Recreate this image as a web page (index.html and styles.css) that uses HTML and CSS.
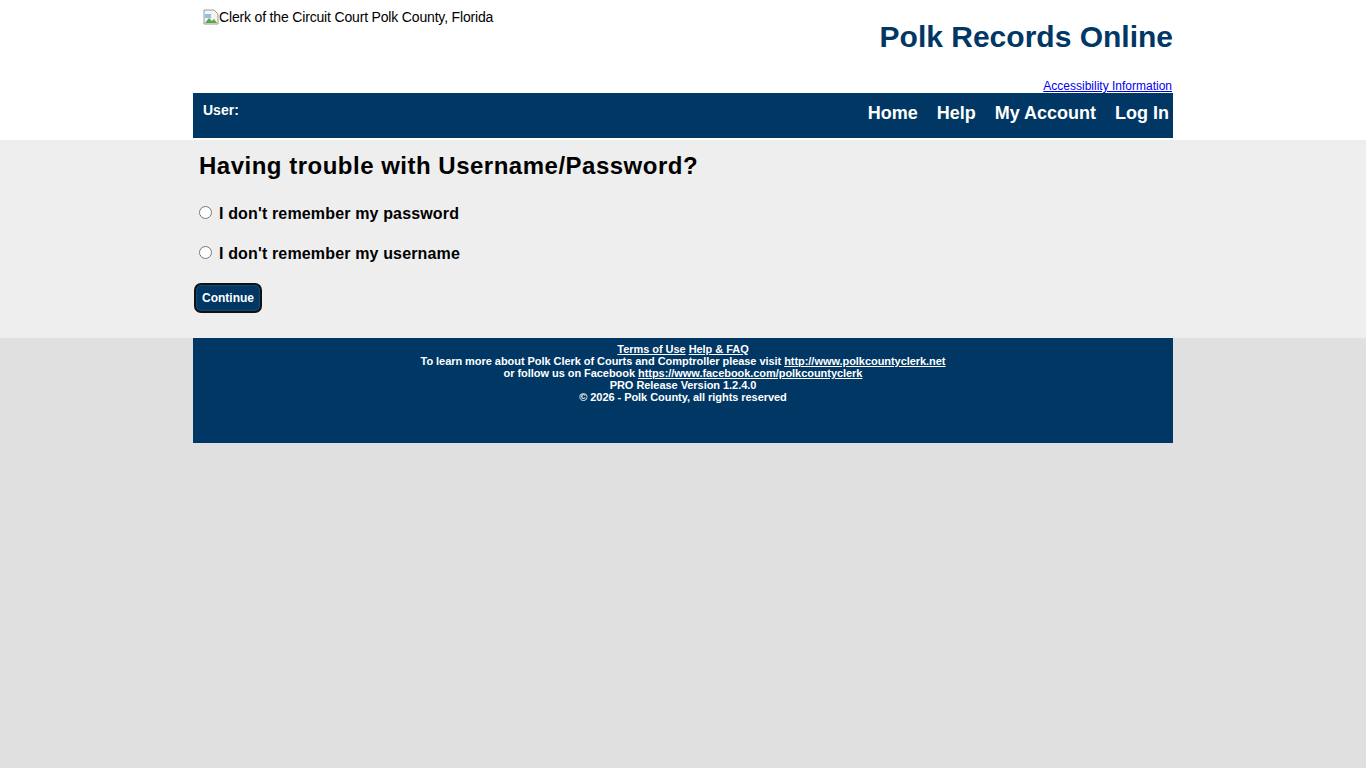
FILE: index.html
```html
<!DOCTYPE html>
<html>
<head>
<meta charset="utf-8">
<title>Polk Records Online</title>
<link rel="stylesheet" href="styles.css">
</head>
<body>
<div class="top">
  <div class="wrap">
    <div class="masthead">
      <div class="logo"><span class="broken"><svg width="16" height="16" viewBox="0 0 16 16"><path d="M1 1h10l4 4v10H1z" fill="#f4f4f4" stroke="#9a9a9a"/><path d="M2 14l4-5 3 3 2-2 3 4z" fill="#5aa845"/><path d="M2 5h6v4H2z" fill="#8fc0e8"/></svg></span>Clerk of the Circuit Court Polk County, Florida</div>
      <div class="brand">
        <h1 class="site-title">Polk Records Online</h1>
        <a class="access" href="#">Accessibility Information</a>
      </div>
    </div>
    <div class="navbar">
      <div class="user">User:</div>
      <nav class="menu">
        <a href="#">Home</a>
        <a href="#">Help</a>
        <a href="#">My Account</a>
        <a href="#">Log In</a>
      </nav>
    </div>
  </div>
</div>
<div class="band">
  <div class="wrap content">
    <h2 class="title">Having trouble with Username/Password?</h2>
    <label class="opt"><input type="radio" name="t"><span>I don't remember my password</span></label>
    <label class="opt"><input type="radio" name="t"><span>I don't remember my username</span></label>
    <button class="btn" type="button">Continue</button>
  </div>
</div>
<div class="wrap footer">
  <div><a href="#">Terms of Use</a> <a href="#">Help &amp; FAQ</a></div>
  <div>To learn more about Polk Clerk of Courts and Comptroller please visit <a href="#">http://www.polkcountyclerk.net</a></div>
  <div>or follow us on Facebook <a href="#">https://www.facebook.com/polkcountyclerk</a></div>
  <div>PRO Release Version 1.2.4.0</div>
  <div>© 2026 - Polk County, all rights reserved</div>
</div>
</body>
</html>
```
FILE: styles.css
```css
html, body {
  margin: 0;
  padding: 0;
}
body {
  background: #e0e0e0;
  font-family: "Liberation Sans", Arial, sans-serif;
  color: #000;
  min-height: 768px;
}
.wrap {
  width: 980px;
  margin: 0 auto;
  box-sizing: border-box;
}
.top {
  background: #fff;
  padding-bottom: 2px;
}
.masthead {
  display: flex;
  justify-content: space-between;
  height: 93px;
}
.logo {
  padding: 9px 0 0 10px;
  font-size: 14px;
  line-height: 16px;
  letter-spacing: -0.17px;
  display: flex;
  align-items: flex-start;
}
.broken {
  display: inline-block;
  width: 16px;
  height: 16px;
}
.brand {
  display: flex;
  flex-direction: column;
  align-items: flex-end;
}
.site-title {
  margin: 20px 0 0 0;
  font-size: 30px;
  line-height: 34px;
  font-weight: bold;
  color: #003764;
}
.access {
  margin-top: 25px;
  font-size: 12px;
  line-height: 14px;
  color: #0000ee;
  margin-right: 1px;
}
.navbar {
  background: #003764;
  height: 45px;
  display: flex;
  justify-content: space-between;
  color: #fff;
}
.user {
  padding: 9px 0 0 10px;
  font-size: 14px;
  line-height: 16px;
  font-weight: bold;
}
.menu {
  display: flex;
  gap: 19px;
  padding: 9px 4px 0 0;
}
.menu a {
  color: #fff;
  font-size: 18px;
  line-height: 22px;
  font-weight: bold;
  text-decoration: none;
}
.band {
  background: #eeeeee;
}
.content {
  padding: 12px 0 25px 0;
  display: flex;
  flex-direction: column;
  align-items: flex-start;
}
.title {
  margin: 0 0 23px 6px;
  font-size: 24px;
  line-height: 28px;
  font-weight: bold;
  letter-spacing: 0.5px;
}
.opt {
  display: flex;
  align-items: center;
  height: 20px;
  margin: 0 0 20px 6px;
  font-size: 16px;
  font-weight: bold;
  letter-spacing: 0.15px;
}
.opt input {
  margin: 0 7px 1px 0;
  width: 13px;
  height: 13px;
}
.opt span {
  position: relative;
  top: 1px;
}
.btn {
  margin-left: 1px;
  width: 68px;
  height: 30px;
  background: #003764;
  color: #fff;
  border: 2px solid #111;
  border-radius: 7px;
  font-family: "Liberation Sans", Arial, sans-serif;
  font-size: 12px;
  font-weight: bold;
  padding: 0;
  box-shadow: inset 0 0 2px rgba(255,255,255,0.3);
}
.footer {
  background: #003764;
  color: #fff;
  height: 105px;
  padding-top: 5px;
  text-align: center;
  font-size: 11px;
  line-height: 12px;
  font-weight: bold;
  letter-spacing: -0.05px;
}
.footer a {
  color: #fff;
  text-decoration: underline;
}
```
